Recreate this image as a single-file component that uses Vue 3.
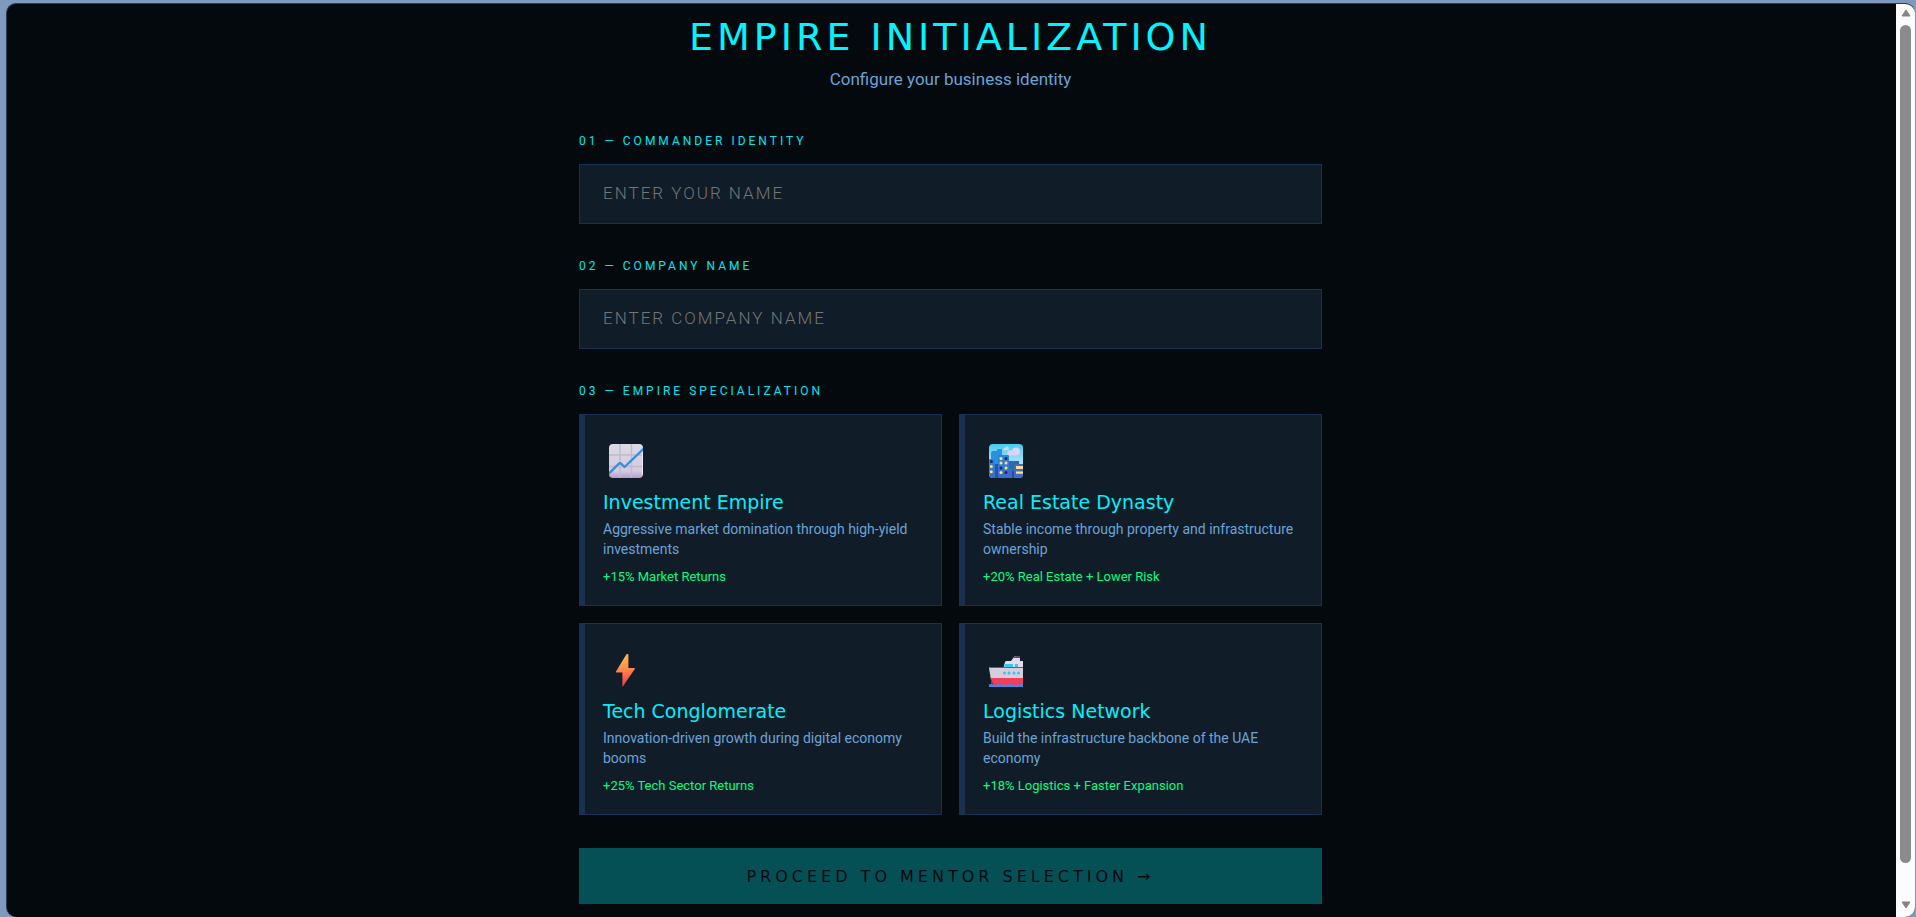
<script setup>
import { computed, ref } from 'vue'

const commander = ref('')
const company = ref('')
const selected = ref(null)

const empires = [
    { id: 'investment', name: 'Investment Empire', text: 'Aggressive market domination through high-yield investments', bonus: '+15% Market Returns' },
    { id: 'realestate', name: 'Real Estate Dynasty', text: 'Stable income through property and infrastructure ownership', bonus: '+20% Real Estate + Lower Risk' },
    { id: 'tech', name: 'Tech Conglomerate', text: 'Innovation-driven growth during digital economy booms', bonus: '+25% Tech Sector Returns' },
    { id: 'logistics', name: 'Logistics Network', text: 'Build the infrastructure backbone of the UAE economy', bonus: '+18% Logistics + Faster Expansion' }
]

const ready = computed(() => commander.value && company.value && selected.value)
</script>

<template>
    <div class="desktop">
        <div class="window">
            <main class="screen">
                <form class="setup" @submit.prevent>
                    <h1>EMPIRE INITIALIZATION</h1>
                    <p class="subtitle">Configure your business identity</p>

                    <div class="field">
                        <label class="step" for="commander">01 — COMMANDER IDENTITY</label>
                        <input id="commander" v-model="commander" type="text" placeholder="ENTER YOUR NAME" />
                    </div>

                    <div class="field">
                        <label class="step" for="company">02 — COMPANY NAME</label>
                        <input id="company" v-model="company" type="text" placeholder="ENTER COMPANY NAME" />
                    </div>

                    <h2 id="specialization" class="step">03 — EMPIRE SPECIALIZATION</h2>
                    <div class="cards" role="group" aria-labelledby="specialization">
                        <button
                            v-for="empire in empires"
                            :key="empire.id"
                            type="button"
                            class="card"
                            :class="{ active: selected === empire.id }"
                            @click="selected = empire.id"
                        >
                            <svg v-if="empire.id === 'investment'" class="icon" viewBox="-6 -6 46 46" aria-hidden="true">
                                <defs>
                                    <linearGradient id="paper" x1="0" y1="0" x2="0" y2="1">
                                        <stop offset="0" stop-color="#dcdae2" />
                                        <stop offset="0.8" stop-color="#d5cae2" />
                                        <stop offset="1" stop-color="#b69bcb" />
                                    </linearGradient>
                                    <clipPath id="paper-clip"><rect width="34" height="34" rx="4" /></clipPath>
                                </defs>
                                <g clip-path="url(#paper-clip)">
                                    <rect width="34" height="34" fill="url(#paper)" />
                                    <path d="M11 0v34M22.5 0v34M0 11h34M0 22.5h34" stroke="#c0b9c9" stroke-width="1.4" />
                                    <path d="M33.5 4v27" stroke="#eee8f2" />
                                    <path d="M-1 30.5 9.5 20Q11 18.5 12.5 20l3 3L35 4.5" fill="none" stroke="#378fd9" stroke-width="2.4" stroke-linejoin="round" />
                                </g>
                            </svg>

                            <svg v-else-if="empire.id === 'realestate'" class="icon" viewBox="-6 -6 46 46" aria-hidden="true">
                                <defs>
                                    <linearGradient id="sky" x1="0" y1="0" x2="0" y2="1">
                                        <stop offset="0" stop-color="#43ccf3" />
                                        <stop offset="0.5" stop-color="#a7defa" />
                                    </linearGradient>
                                    <linearGradient id="tower" x1="0" y1="0" x2="0" y2="1">
                                        <stop offset="0" stop-color="#2788e2" />
                                        <stop offset="1" stop-color="#4168cc" />
                                    </linearGradient>
                                    <clipPath id="sky-clip"><rect width="34" height="34" rx="4" /></clipPath>
                                </defs>
                                <g clip-path="url(#sky-clip)">
                                    <rect width="34" height="34" fill="url(#sky)" />
                                    <g fill="#ddd4fa">
                                        <circle cx="27" cy="7.5" r="4" />
                                        <circle cx="21" cy="9" r="2.7" />
                                        <circle cx="24" cy="9.5" r="2" />
                                        <circle cx="18" cy="4.4" r="1.8" />
                                        <circle cx="15.7" cy="5.2" r="1.2" />
                                    </g>
                                    <path d="M2 34V9q0-2 2-2h4V6q0-1 1-1h3q1 0 1 1v28z" fill="#2b91dd" />
                                    <path d="M19 17h11v17H19z" fill="#286da9" />
                                    <path d="M5 20h5v14H5z" fill="#2359a4" />
                                    <path d="M0 15h5q1 0 1 1v18H0z" fill="url(#tower)" />
                                    <path d="M9 34V12q0-1 1-1h9q1 0 1 1v22z" fill="url(#tower)" />
                                    <path d="M18 25h4q1 0 1 1v8h-5zM25 34V22q0-2 2-2h7v14z" fill="#416acb" />
                                    <path d="M23 27h2v7h-2z" fill="#224f9c" />
                                    <g fill="#ffe07b">
                                        <path d="M27 22h8v3h-8zM27 27.5h8v2.3h-8z" />
                                        <circle cx="12" cy="14.5" r="1.5" />
                                        <circle cx="12" cy="19" r="1.5" />
                                        <circle cx="17" cy="19" r="1.5" />
                                        <circle cx="17" cy="24" r="1.5" />
                                        <circle cx="12" cy="28.5" r="1.5" />
                                        <circle cx="2.3" cy="22.5" r="1.5" />
                                        <circle cx="2.3" cy="27.7" r="1.5" />
                                    </g>
                                    <g fill="#222b4b">
                                        <circle cx="17" cy="14.5" r="1.5" />
                                        <circle cx="12" cy="24" r="1.5" />
                                        <circle cx="17" cy="28.5" r="1.5" />
                                        <circle cx="2.3" cy="17.5" r="1.5" />
                                    </g>
                                </g>
                            </svg>

                            <svg v-else-if="empire.id === 'tech'" class="icon" viewBox="-6 -6 46 46" aria-hidden="true">
                                <defs>
                                    <linearGradient id="bolt" x1="0.4" y1="0" x2="0.5" y2="1">
                                        <stop offset="0.15" stop-color="#ffb04a" />
                                        <stop offset="0.5" stop-color="#fb8549" />
                                        <stop offset="0.9" stop-color="#f1434e" />
                                    </linearGradient>
                                </defs>
                                <path d="M17.3 1.4 7 18.5q-.5 1 .6 1h5.8v13.4q0 1.3.8.2L25.8 16.1q.6-1-.4-1h-6V2q0-1.4-1-.9z" fill="url(#bolt)" />
                            </svg>

                            <svg v-else class="icon" viewBox="-6 -6 46 46" aria-hidden="true">
                                <path d="m22 8 3-4q1-1 2-1h4v6h-9z" fill="#e5d9ec" />
                                <path d="m24.5 5 1.5-1.4q.6-.6 1.5-.6H31v2z" fill="#594b65" />
                                <path d="M14 16.5 16 9q.3-1 1.3-1H34v8.5z" fill="#e3dcea" />
                                <path d="M15.5 11H24v3h-8.5zM26 11h3v3h-3z" fill="#35c9f2" />
                                <path d="M0 15q0-.8 1-.8h33V33H3z" fill="#d5cede" />
                                <path d="M1 14.5h33" stroke="#675c76" />
                                <path d="M2 25h32v8H4.5z" fill="#f43c5b" />
                                <path d="m2 25 2.8 8H3l-1.5-8z" fill="#493753" />
                                <g fill="#36c3ef">
                                    <circle cx="15.5" cy="20" r="1.5" />
                                    <circle cx="20" cy="20" r="1.5" />
                                    <circle cx="25" cy="20" r="1.5" />
                                    <circle cx="29.5" cy="20" r="1.5" />
                                </g>
                                <path d="M0 31.5q2-1 4 0t5 0 5 0 5 0 5 0 5 0 5 0V34H0z" fill="#4687df" />
                            </svg>

                            <span class="name">{{ empire.name }}</span>
                            <span class="text">{{ empire.text }}</span>
                            <span class="bonus">{{ empire.bonus }}</span>
                        </button>
                    </div>

                    <button class="proceed" :disabled="!ready">PROCEED TO MENTOR SELECTION →</button>
                </form>
            </main>

            <div class="scrollbar" aria-hidden="true">
                <svg viewBox="0 0 10 8"><path d="M5 1 9 7H1z" /></svg>
                <div class="thumb"></div>
                <svg viewBox="0 0 10 8"><path d="M5 7 1 1h8z" /></svg>
            </div>
        </div>
    </div>
</template>

<style>
body {
    margin: 0;
    background: #7f9abf;
}
</style>

<style scoped>
.desktop {
    box-sizing: border-box;
    height: 100vh;
    padding: 3px 1px 0 6px;
    font-family: Roboto, "Open Sans", sans-serif;
}

.window {
    box-sizing: border-box;
    display: flex;
    height: 100%;
    overflow: hidden;
    border: 1px solid #2b3a50;
    border-right: none;
    border-bottom: none;
    border-radius: 10px;
    background: #04090d;
}

.screen {
    flex: 1;
    padding-right: 2px;
    overflow: hidden;
}

.setup {
    max-width: 743px;
    margin: 0 auto;
    padding: 11px 0 12px;
}

h1 {
    margin: 0;
    color: #00f5ff;
    font-family: "DejaVu Sans", sans-serif;
    font-size: 38px;
    font-weight: 400;
    line-height: 44px;
    letter-spacing: 4px;
    text-align: center;
    white-space: nowrap;
}

.subtitle {
    margin: 6px 0 38px;
    color: #6ba3d6;
    font-size: 17px;
    line-height: 28px;
    text-align: center;
}

.field {
    margin-bottom: 32px;
}

.step {
    display: block;
    margin: 0 0 13px;
    color: #00e5f0;
    font-size: 12px;
    font-weight: 400;
    line-height: 20px;
    letter-spacing: 3px;
}

input {
    box-sizing: border-box;
    display: block;
    width: 100%;
    height: 60px;
    padding: 0 23px 2px;
    border: 1px solid #1a3050;
    border-radius: 0;
    outline: none;
    background: #111c29;
    color: #00f5ff;
    font-family: inherit;
    font-size: 17px;
    font-weight: 300;
    letter-spacing: 2px;
}

input::placeholder {
    color: #757575;
}

.cards {
    display: grid;
    grid-template-columns: 1fr 1fr;
    gap: 17px;
}

.card {
    display: flex;
    flex-direction: column;
    padding: 23px 23px 18px 18px;
    border: 1px solid #1a3050;
    border-left: 6px solid #1a3050;
    background: #111c29;
    font-family: inherit;
    text-align: left;
    cursor: pointer;
}

.card.active {
    border-color: #00f5ff;
}

.icon {
    width: 46px;
    height: 46px;
}

.name {
    margin-top: 6px;
    color: #00f0fa;
    font-family: "DejaVu Sans", sans-serif;
    font-size: 19px;
    font-weight: 400;
    line-height: 24px;
}

.text {
    margin-top: 5px;
    color: #6ba3d6;
    font-size: 14px;
    line-height: 20px;
}

.bonus {
    margin-top: 8px;
    color: #00ff7f;
    font-size: 13px;
    line-height: 20px;
}

.proceed {
    width: 100%;
    height: 56px;
    margin-top: 33px;
    border: none;
    background: #00f5ff;
    color: #04090d;
    font-family: "DejaVu Sans", sans-serif;
    font-size: 16px;
    letter-spacing: 4px;
    cursor: pointer;
}

.proceed:disabled {
    background: #045055;
    cursor: not-allowed;
}

.scrollbar {
    display: flex;
    flex-direction: column;
    align-items: center;
    width: 19px;
    padding: 5px 0 8px;
    box-sizing: border-box;
    background: #fcfcfc;
}

.scrollbar svg {
    width: 10px;
    height: 8px;
    fill: #858585;
    stroke: #858585;
    stroke-linejoin: round;
}

.thumb {
    flex: 1;
    width: 11px;
    margin: 8px 0 38px;
    border-radius: 6px;
    background: #8b8b8b;
}
</style>
